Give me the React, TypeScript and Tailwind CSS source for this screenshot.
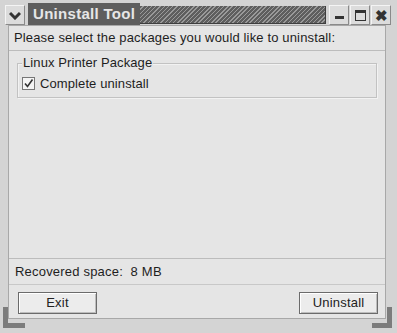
import React from "react";

const font = "font-['Liberation_Sans',Arial,sans-serif]";

const TitleButton: React.FC<{ children: React.ReactNode }> = ({ children }) => (
  <div className="flex h-[20px] w-[20px] items-center justify-center border border-t-[#f4f4f4] border-l-[#f4f4f4] border-r-[#8a8a8a] border-b-[#8a8a8a] bg-[#dcdcdc]">
    {children}
  </div>
);

const Button: React.FC<{ label: string }> = ({ label }) => (
  <button className="flex h-[22px] w-[79px] items-center justify-center border border-[#6b6b6b] bg-[#ececec] text-[13px] tracking-[0.2px] text-[#222] shadow-[inset_1px_1px_0_#fff,inset_-1px_-1px_0_#bdbdbd]">
    {label}
  </button>
);

export default function App() {
  return (
    <div className={`${font} relative flex h-[333px] w-[397px] flex-col bg-[#d4d4d4] pl-[5px] pr-[6px] pt-[5px]`}>
      {/* title bar */}
      <div className="flex h-[20px] items-center gap-[1px]">
        <TitleButton>
          <svg width="12" height="9" viewBox="0 0 12 9">
            <path d="M1 2 L6 7 L11 2" stroke="#333" strokeWidth="3" fill="none" />
          </svg>
        </TitleButton>
        <div className="ml-[2px] mr-[2px] flex h-[18px] flex-1 items-center border-b border-r border-[#3e3e3e] bg-[#5e5e5e]">
          <span className="bg-[#5e5e5e] px-[5px] text-[15px] font-bold tracking-[0.3px] text-[#e6e6e6]">Uninstall Tool</span>
          <div className="h-full flex-1 bg-[repeating-linear-gradient(135deg,#5e5e5e_0px,#5e5e5e_2px,#9a9a9a_2px,#9a9a9a_3px)]" />
        </div>
        <TitleButton>
          <div className="mt-[4px] h-[3px] w-[9px] bg-[#333]" />
        </TitleButton>
        <TitleButton>
          <div className="h-[11px] w-[11px] border border-t-[3px] border-[#333]" />
        </TitleButton>
        <TitleButton>
          <span className="text-[15px] font-bold leading-none text-[#333]">✖</span>
        </TitleButton>
      </div>

      {/* content */}
      <div className="ml-[3px] mr-[5px] flex h-[294px] flex-col border border-[#a8a8a8] bg-[#e5e5e5]">
        <div className="flex h-[24px] items-center pl-[5px] text-[13px] tracking-[0.15px] text-[#1e1e1e]">
          Please select the packages you would like to uninstall:
        </div>
        <div className="flex h-[209px] flex-col border-t border-b border-[#bcbcbc] px-[8px] pt-[12px]">
          <div className="relative h-[35px] border border-[#c2c2c2] shadow-[inset_1px_1px_0_#f2f2f2,1px_1px_0_#f2f2f2]">
            <span className="absolute left-[4px] top-[-9px] bg-[#e5e5e5] px-[1px] text-[13px] leading-[16px] tracking-[0.1px] text-[#1e1e1e]">
              Linux Printer Package
            </span>
            <div className="flex items-center gap-[5px] pl-[4px] pt-[10px]">
              <div className="flex h-[13px] w-[13px] items-center justify-center border border-[#777] bg-[#f4f4f4]">
                <svg width="11" height="11" viewBox="0 0 11 11">
                  <path d="M2 5.5 L4.5 8.5 L9.5 1.5" stroke="#333" strokeWidth="1.6" fill="none" />
                </svg>
              </div>
              <span className="text-[13px] tracking-[0.1px] text-[#1e1e1e]">Complete uninstall</span>
            </div>
          </div>
        </div>
        <div className="flex h-[25px] items-center pl-[6px] text-[13px] tracking-[0.2px] text-[#1e1e1e]">
          Recovered space:&nbsp;&nbsp;8 MB
        </div>
        <div className="flex flex-1 items-start justify-between border-t border-[#c8c8c8] pl-[9px] pr-[7px] pt-[7px]">
          <Button label="Exit" />
          <Button label="Uninstall" />
        </div>
      </div>

      {/* resize handles */}
      <div className="absolute bottom-[5px] left-[3px] h-[21px] w-[22px] border-b-[5px] border-l-[5px] border-[#7c7c7c]" />
      <div className="absolute bottom-[5px] right-[5px] h-[21px] w-[20px] border-b-[5px] border-r-[5px] border-[#7c7c7c]" />
    </div>
  );
}
